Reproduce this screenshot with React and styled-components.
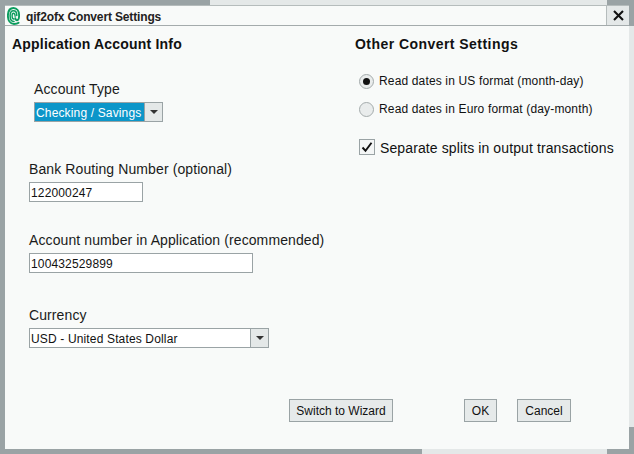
import React from "react";
import styled, { createGlobalStyle } from "styled-components";

const Global = createGlobalStyle`
  html, body { margin: 0; padding: 0; width: 634px; height: 454px; overflow: hidden; }
  body { font-family: "Liberation Sans", Arial, sans-serif; color: #111; }
`;

const Desktop = styled.div`
  width: 634px;
  height: 454px;
  box-sizing: border-box;
  padding: 5px;
  background:
    linear-gradient(#9aa3a5, #9aa3a5) 607px 0 / 27px 26px no-repeat,
    linear-gradient(#e4e8e8, #e4e8e8) 210px 0 / 397px 5px no-repeat,
    linear-gradient(#e4e8e8, #e4e8e8) 629px 26px / 5px 401px no-repeat,
    linear-gradient(#e4e8e8, #e4e8e8) 422px 449px / 185px 5px no-repeat,
    #9aa3a5;
`;

const Window = styled.div`
  width: 624px;
  height: 444px;
  display: flex;
  flex-direction: column;
  background: #f8faf9;
`;

const TitleBar = styled.div`
  height: 21px;
  flex: none;
  display: flex;
  align-items: stretch;
  box-sizing: border-box;
  background: #f8faf9;
  border-top: 1px solid #b5bcbc;
  border-bottom: 1px solid #a4abac;
`;

const TitleLeft = styled.div`
  flex: 1;
  display: flex;
  align-items: center;
  gap: 6px;
  padding-left: 2px;
  font-size: 12px;
  font-weight: bold;
  letter-spacing: -0.15px;
  color: #222;
  border-right: 1px solid #b5bcbc;
`;

const TitleText = styled.span`
  padding-top: 2px;
`;

const CloseBox = styled.div`
  width: 22px;
  display: flex;
  align-items: center;
  justify-content: center;
  background: #e4e8e8;
`;

const Body = styled.div`
  flex: 1;
  display: flex;
  flex-direction: column;
  padding: 10px 7px 0 7px;
`;

const Columns = styled.div`
  flex: 1;
  display: flex;
`;

const LeftCol = styled.div`
  width: 343px;
  flex: none;
`;

const RightCol = styled.div`
  flex: 1;
`;

const Heading = styled.div`
  font-size: 14px;
  font-weight: bold;
  line-height: 16px;
  letter-spacing: ${(p) => p.$spacing}px;
  color: #111;
`;

const Field = styled.div`
  margin-left: ${(p) => p.$indent}px;
  margin-top: ${(p) => p.$top}px;
`;

const Label = styled.div`
  font-size: 14px;
  line-height: 16px;
  letter-spacing: 0.1px;
  color: #1a1a1a;
  margin-bottom: ${(p) => p.$gap}px;
`;

const Input = styled.div`
  width: ${(p) => p.$w}px;
  height: 20px;
  box-sizing: border-box;
  border: 1px solid #9aa3a5;
  background: #fff;
  font-size: 12px;
  line-height: 20px;
  letter-spacing: 0.15px;
  padding-left: 1px;
  color: #111;
`;

const Combo = styled.div`
  width: ${(p) => p.$w}px;
  height: 20px;
  box-sizing: border-box;
  display: flex;
  border: 1px solid #9aa3a5;
  background: ${(p) => (p.$selected ? "#0c96c9" : "#fff")};
`;

const ComboText = styled.div`
  flex: 1;
  font-size: 12px;
  line-height: 20px;
  height: 18px;
  letter-spacing: 0.15px;
  padding-left: 1px;
  color: ${(p) => (p.$selected ? "#fff" : "#111")};
`;

const ComboArrow = styled.div`
  width: 18px;
  flex: none;
  display: flex;
  align-items: center;
  justify-content: center;
  box-sizing: border-box;
  border-left: 1px solid #9aa3a5;
  background: #e4e8e8;
`;

const Arrow = styled.div`
  width: 0;
  height: 0;
  border-left: 4px solid transparent;
  border-right: 4px solid transparent;
  border-top: 4px solid #333;
`;

const RadioRow = styled.div`
  display: flex;
  align-items: center;
  height: 18px;
  margin-left: 4px;
  margin-top: ${(p) => p.$top}px;
  gap: 5px;
  font-size: 12px;
  letter-spacing: 0.15px;
  color: #111;
`;

const Radio = styled.div`
  width: 15px;
  height: 15px;
  box-sizing: border-box;
  flex: none;
  border-radius: 50%;
  border: 1px solid #a4abac;
  background: #e9ecec;
  display: flex;
  align-items: center;
  justify-content: center;
`;

const RadioDot = styled.div`
  width: 7px;
  height: 7px;
  border-radius: 50%;
  background: #111;
`;

const CheckRow = styled.div`
  display: flex;
  align-items: center;
  height: 18px;
  margin-left: 4px;
  margin-top: 20px;
  gap: 5px;
  font-size: 14px;
  letter-spacing: 0.11px;
  color: #111;
`;

const CheckLabel = styled.span`
  padding-top: 2px;
`;

const CheckBox = styled.div`
  width: 16px;
  height: 16px;
  box-sizing: border-box;
  flex: none;
  border: 1px solid #9aa3a5;
  background: #f4f6f6;
  display: flex;
  align-items: center;
  justify-content: center;
`;

const Footer = styled.div`
  flex: none;
  display: flex;
  height: 50px;
  padding-left: 277px;
  align-items: flex-start;
`;

const Button = styled.div`
  height: 23px;
  box-sizing: border-box;
  border: 1px solid #9aa3a5;
  background: #e6eaea;
  font-size: 12px;
  line-height: 23px;
  text-align: center;
  width: ${(p) => p.$w}px;
  margin-left: ${(p) => p.$left}px;
  color: #111;
`;

const Logo = () => (
  <svg width="13" height="18" viewBox="0 0 13 18" fill="none" stroke="#0c9c5e" strokeLinecap="round">
    <path d="M11.6 15.8C10.6 16.6 9 17 7 17 3 17 .9 13.2.9 8.8.9 4 3 1 6.5 1s5.6 3.2 5.6 7.4c0 3-.9 4.8-2.3 4.8-1 0-1.5-.9-1.5-2.1" strokeWidth="1.9" />
    <path d="M7 14.5C4.5 14.5 3.1 12 3.1 8.8c0-2.8 1.3-5 3.4-5s3.3 2.1 3.3 4.7" strokeWidth="1.5" />
    <path d="M8.1 9.2c0-1.6-.6-2.9-1.6-2.9S5.1 7.5 5.1 9c0 1.6.7 3 1.8 3" strokeWidth="1.4" />
  </svg>
);

const CloseIcon = () => (
  <svg width="11" height="11" viewBox="0 0 11 11" stroke="#111" strokeWidth="2.1">
    <path d="M1 1l9 9M10 1l-9 9" />
  </svg>
);

const Check = () => (
  <svg width="12" height="12" viewBox="0 0 12 12" fill="none" stroke="#111" strokeWidth="1.9">
    <path d="M1.5 6.5l3 3.2 6-8" />
  </svg>
);

export default function App() {
  return (
    <Desktop>
      <Global />
      <Window>
        <TitleBar>
          <TitleLeft>
            <Logo />
            <TitleText>qif2ofx Convert Settings</TitleText>
          </TitleLeft>
          <CloseBox>
            <CloseIcon />
          </CloseBox>
        </TitleBar>
        <Body>
          <Columns>
            <LeftCol>
              <Heading $spacing={0.2}>Application Account Info</Heading>
              <Field $indent={22} $top={29}>
                <Label $gap={5}>Account Type</Label>
                <Combo $w={129} $selected>
                  <ComboText $selected>Checking / Savings</ComboText>
                  <ComboArrow><Arrow /></ComboArrow>
                </Combo>
              </Field>
              <Field $indent={17} $top={39}>
                <Label $gap={5}>Bank Routing Number (optional)</Label>
                <Input $w={114}>122000247</Input>
              </Field>
              <Field $indent={17} $top={30}>
                <Label $gap={5}>Account number in Application (recommended)</Label>
                <Input $w={224}>100432529899</Input>
              </Field>
              <Field $indent={17} $top={34}>
                <Label $gap={5}>Currency</Label>
                <Combo $w={240}>
                  <ComboText>USD - United States Dollar</ComboText>
                  <ComboArrow><Arrow /></ComboArrow>
                </Combo>
              </Field>
            </LeftCol>
            <RightCol>
              <Heading $spacing={0.45}>Other Convert Settings</Heading>
              <RadioRow $top={20}>
                <Radio><RadioDot /></Radio>
                Read dates in US format (month-day)
              </RadioRow>
              <RadioRow $top={10}>
                <Radio />
                Read dates in Euro format (day-month)
              </RadioRow>
              <CheckRow>
                <CheckBox><Check /></CheckBox>
                <CheckLabel>Separate splits in output transactions</CheckLabel>
              </CheckRow>
            </RightCol>
          </Columns>
          <Footer>
            <Button $w={104} $left={0}>Switch to Wizard</Button>
            <Button $w={33} $left={71}>OK</Button>
            <Button $w={54} $left={20}>Cancel</Button>
          </Footer>
        </Body>
      </Window>
    </Desktop>
  );
}
